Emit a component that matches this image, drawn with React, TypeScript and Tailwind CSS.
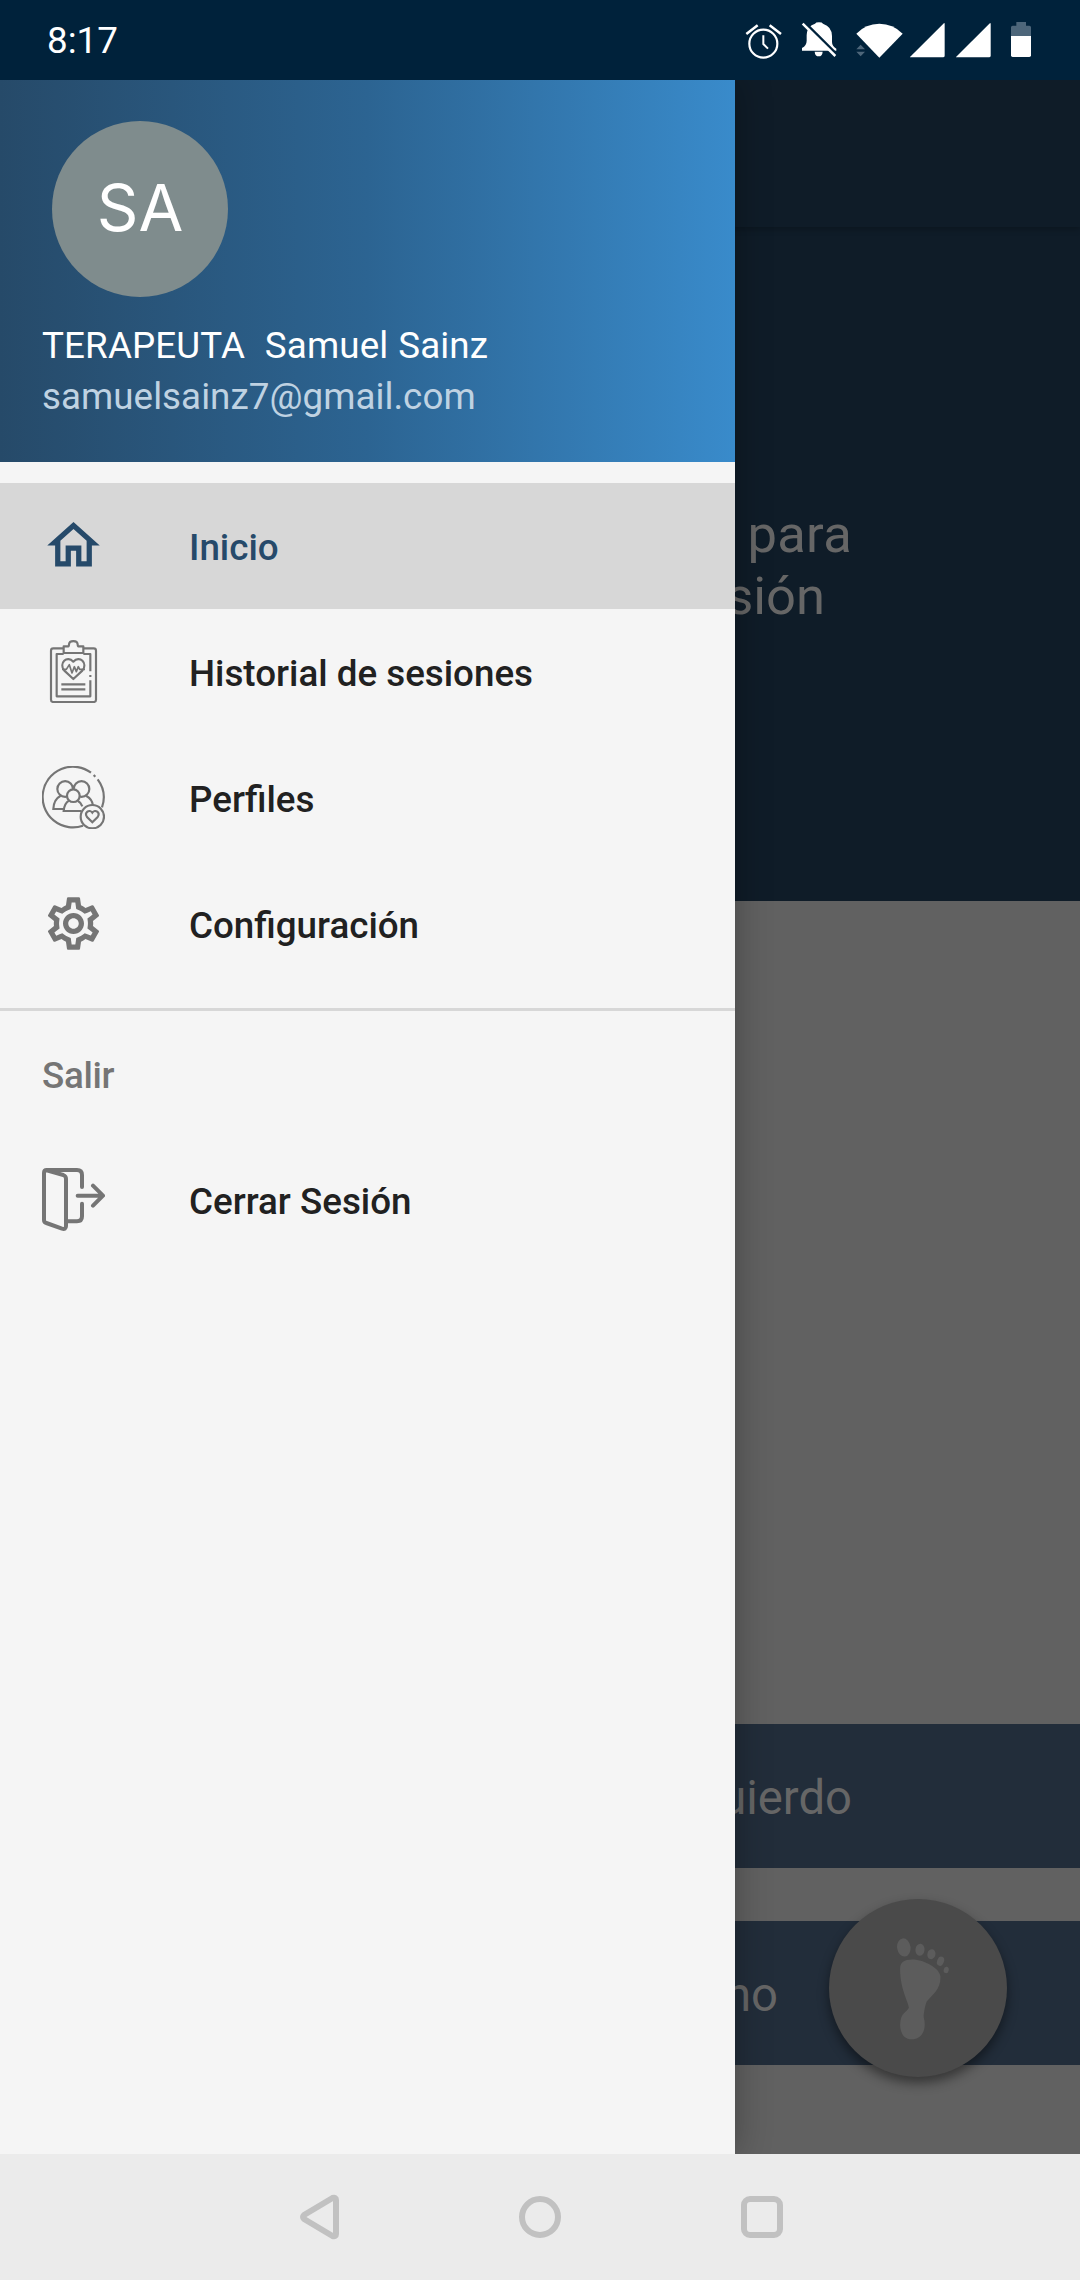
import type { ReactNode } from "react";
import { MdOutlineHome, MdOutlineSettings } from "react-icons/md";

function StatusIcons() {
  return (
    <svg className="h-[100px] w-[360px] shrink-0" viewBox="0 0 1080 300">
      <g fill="none" stroke="#fff" strokeWidth="6.5">
        <circle cx="130" cy="131" r="42" />
        <path d="M130 106v26l14 14" strokeWidth="6" />
        <path d="M79 102l34-26M183 102l-34-26" strokeWidth="7.5" />
      </g>
      <path
        d="M246 152v-8q14-8 14-22v-16q0-20 15-30l10-5q2-4 12-4t12 4q27 9 27 37v18q0 12 13 20v6zM284 155h24q-1 14-12 14t-12-14z"
        fill="#fff"
      />
      <path d="M252 65l97 97" stroke="#00223b" strokeWidth="8" />
      <path d="M248 71l98 97" stroke="#fff" strokeWidth="7.5" />
      <path d="M409 101Q437 71 478 71t70 30l-70 72z" fill="#fff" />
      <path d="M409 148l13-14 13 14zM409 155h26l-13 14z" fill="#4d667a" />
      <path d="M570 171L670 71q4-4 4 1v95q0 5-5 5h-97q-3 0-2-1z" fill="#fff" />
      <path d="M708 171L808 71q4-4 4 1v95q0 5-5 5h-97q-3 0-2-1z" fill="#fff" />
      <path d="M873 108V82q0-5 5-5h11V66h29v11h10q5 0 5 5v26z" fill="#4d667a" />
      <path d="M873 108h60v58q0 5-5 5h-50q-5 0-5-5z" fill="#fff" />
    </svg>
  );
}

function ClipboardIcon() {
  return (
    <svg className="size-[63px]" viewBox="66 450 189 189" fill="none" stroke="#757575" strokeWidth="6.5" strokeLinejoin="round">
      <path d="M131 475h-31q-7 0-7 7v147q0 7 7 7h121q7 0 7-7V482q0-7-7-7h-31" />
      <path d="M131 489v-20h14q2 0 2-6c1-13 25-13 26 0q0 6 2 6h15v20z" />
      <path d="M131 492h-21v127h101v-48M190 492h21v52" />
      <path d="M211 555v6" />
      <path d="M160 567l-27-25c-18-22 8-48 27-27 19-21 45 5 27 27z" />
      <path d="M126 538h13l9-14 8 25 7-19 6 15 6-15 4 8h16" strokeWidth="5" />
      <path d="M124 583h72M124 598h72" />
    </svg>
  );
}

function ProfilesIcon() {
  return (
    <svg className="size-[63px]" viewBox="66 108 189 189" fill="none" stroke="#757575" strokeWidth="6.5">
      <path d="M213 128A91 91 0 1 0 189 287M233 148A91 91 0 0 1 246 232" />
      <path d="M221 135l5 5" />
      <circle cx="135.5" cy="177" r="23.5" />
      <circle cx="184.500" cy="177" r="23.5" />
      <path d="M122 197q-21 11-22 40h34M198 197q19 10 21 30" />
      <circle cx="160" cy="197" r="19" fill="#f5f5f5" />
      <path d="M147 212q-14 8-16 31h53M173 212q10 5 14 17" />
      <circle cx="217" cy="260" r="35" fill="#f5f5f5" />
      <path d="M217 277l-16-16c-9-13 7-25 16-13 9-12 25 0 16 13z" />
    </svg>
  );
}

function ExitIcon() {
  return (
    <svg className="size-[63px]" viewBox="66 84 189 189" fill="none" stroke="#757575" strokeWidth="12" strokeLinecap="round" strokeLinejoin="round">
      <path d="M186 141v-36q0-15-15-15H80q-8 0-8 9v141q0 7 7 9l47 17q12 3 12-8V116q0-8-8-11L80 91" />
      <path d="M186 191v38q0 15-15 15h-31" />
      <path d="M173 167h74M219 137l30 30-30 30" />
    </svg>
  );
}

function FootIcon() {
  return (
    <svg className="h-[102px] w-[54px]" viewBox="142 173 156 303" fill="#5c5c5c">
      <ellipse cx="163" cy="201" rx="20" ry="27" transform="rotate(-8 163 201)" />
      <ellipse cx="211" cy="208" rx="13.5" ry="18" transform="rotate(5 211 208)" />
      <ellipse cx="245" cy="221" rx="12" ry="15" transform="rotate(14 245 221)" />
      <ellipse cx="272" cy="242" rx="10" ry="14" transform="rotate(22 272 242)" />
      <ellipse cx="289" cy="268" rx="7.5" ry="9.5" transform="rotate(12 289 268)" />
      <path d="M188 237C225 237 272 265 272 289C272 328 248 340 231 362C224 381 222 400 222 408C231 440 221 474 185 474C155 474 147 437 155 411C160 394 175 389 178 380C178 365 151 323 152 263Q152 237 188 237Z" />
    </svg>
  );
}

function DrawerItem({ icon, label, active = false }: { icon: ReactNode; label: string; active?: boolean }) {
  return (
    <div
      className={
        active
          ? "flex h-[126px] items-center bg-[#d7d7d7] pl-[42px] text-[#264a6a]"
          : "flex h-[126px] items-center pl-[42px] text-[#212121]"
      }
    >
      <span className="pb-[2px]">{icon}</span>
      <span className="ml-[84px] pt-[4px] text-[36.75px] leading-none font-medium">{label}</span>
    </div>
  );
}

function Drawer() {
  return (
    <aside className="absolute inset-y-0 left-0 w-[735px] bg-[#f5f5f5] shadow-[0_0_34px_rgba(0,0,0,0.3)]">
      <header className="flex h-[382px] flex-col bg-linear-to-r from-[#264a69] via-[#2c6492] via-50% to-[#398bcb] pt-[41px] pl-[42px]">
        <div className="ml-[10px] flex size-[176px] items-center justify-center rounded-full bg-[#7f8c8d] pb-[2px] font-[Inter,sans-serif] text-[65px] text-white">
          SA
        </div>
        <p className="mt-[27px] text-[36.75px] leading-[43px] tracking-[0.14px] whitespace-pre text-white [word-spacing:0.6px]">
          {"TERAPEUTA  Samuel Sainz"}
        </p>
        <p className="mt-[8px] text-[36.75px] leading-[43px] tracking-[0.04px] text-[#bfd2e2]">samuelsainz7@gmail.com</p>
      </header>
      <nav className="pt-[21px]">
        <DrawerItem active icon={<MdOutlineHome className="size-[63px]" />} label="Inicio" />
        <DrawerItem icon={<ClipboardIcon />} label="Historial de sesiones" />
        <DrawerItem icon={<ProfilesIcon />} label="Perfiles" />
        <DrawerItem icon={<MdOutlineSettings className="size-[63px] text-[#757575]" />} label="Configuración" />
        <div className="mt-[21px] h-[3px] bg-[#d7d7d7]" />
        <div className="flex h-[126px] items-center pt-[4px] pl-[42px] text-[36.75px] font-medium tracking-[-0.3px] text-[#757575]">
          Salir
        </div>
        <DrawerItem icon={<ExitIcon />} label="Cerrar Sesión" />
      </nav>
    </aside>
  );
}

function DimmedScreen() {
  return (
    <div className="flex h-full flex-col bg-[#616161] text-right text-[#666]">
      <div className="relative h-[147px] bg-[#0f1c28] shadow-[0_2px_6px_rgba(0,0,0,0.25)]" />
      <div className="h-[674px] bg-[#0f1c28] pt-[276px] text-[52.5px] leading-[62px]">
        <p className="pr-[228px] tracking-[0.3px]">para</p>
        <p className="pr-[255px]">sesión</p>
      </div>
      <div className="mt-[823px] h-[144px] bg-[#222d3a] pt-[47px] pr-[228px] text-[47.25px] leading-[55px]">izquierdo</div>
      <div className="mt-[53px] h-[144px] bg-[#222d3a] pt-[47px] pr-[302px] text-[47.25px] leading-[55px]">derecho</div>
      <div className="absolute right-[73px] bottom-[77.5px] flex size-[178px] items-center justify-center rounded-full bg-[#4a4a4a] pt-[2px] pl-[9px] shadow-[0_6px_12px_rgba(0,0,0,0.45)]">
        <FootIcon />
      </div>
    </div>
  );
}

function SystemNav() {
  return (
    <footer className="flex h-[126px] items-center justify-center bg-[#ebebeb]">
      <svg className="h-[50px] w-[490px]" viewBox="0 0 490 50" fill="none" stroke="#c1c1c1" strokeWidth="6" strokeLinejoin="round">
        <path d="M9 23L37.500 6Q41 5 41 8V42Q41 45 37.500 44L9 27Q7 25 9 23Z" />
        <circle cx="245" cy="25" r="18" />
        <rect x="449" y="7" width="36" height="36" rx="6" />
      </svg>
    </footer>
  );
}

export default function App() {
  return (
    <div className="flex h-[2280px] w-[1080px] flex-col overflow-hidden font-[Roboto,sans-serif]">
      <div className="flex h-[80px] items-start justify-between bg-[#00223b] text-white">
        <span className="pt-[19px] pl-[47px] text-[36.75px] leading-[44px]">8:17</span>
        <StatusIcons />
      </div>
      <main className="relative h-[2074px] overflow-hidden">
        <DimmedScreen />
        <Drawer />
      </main>
      <SystemNav />
    </div>
  );
}
